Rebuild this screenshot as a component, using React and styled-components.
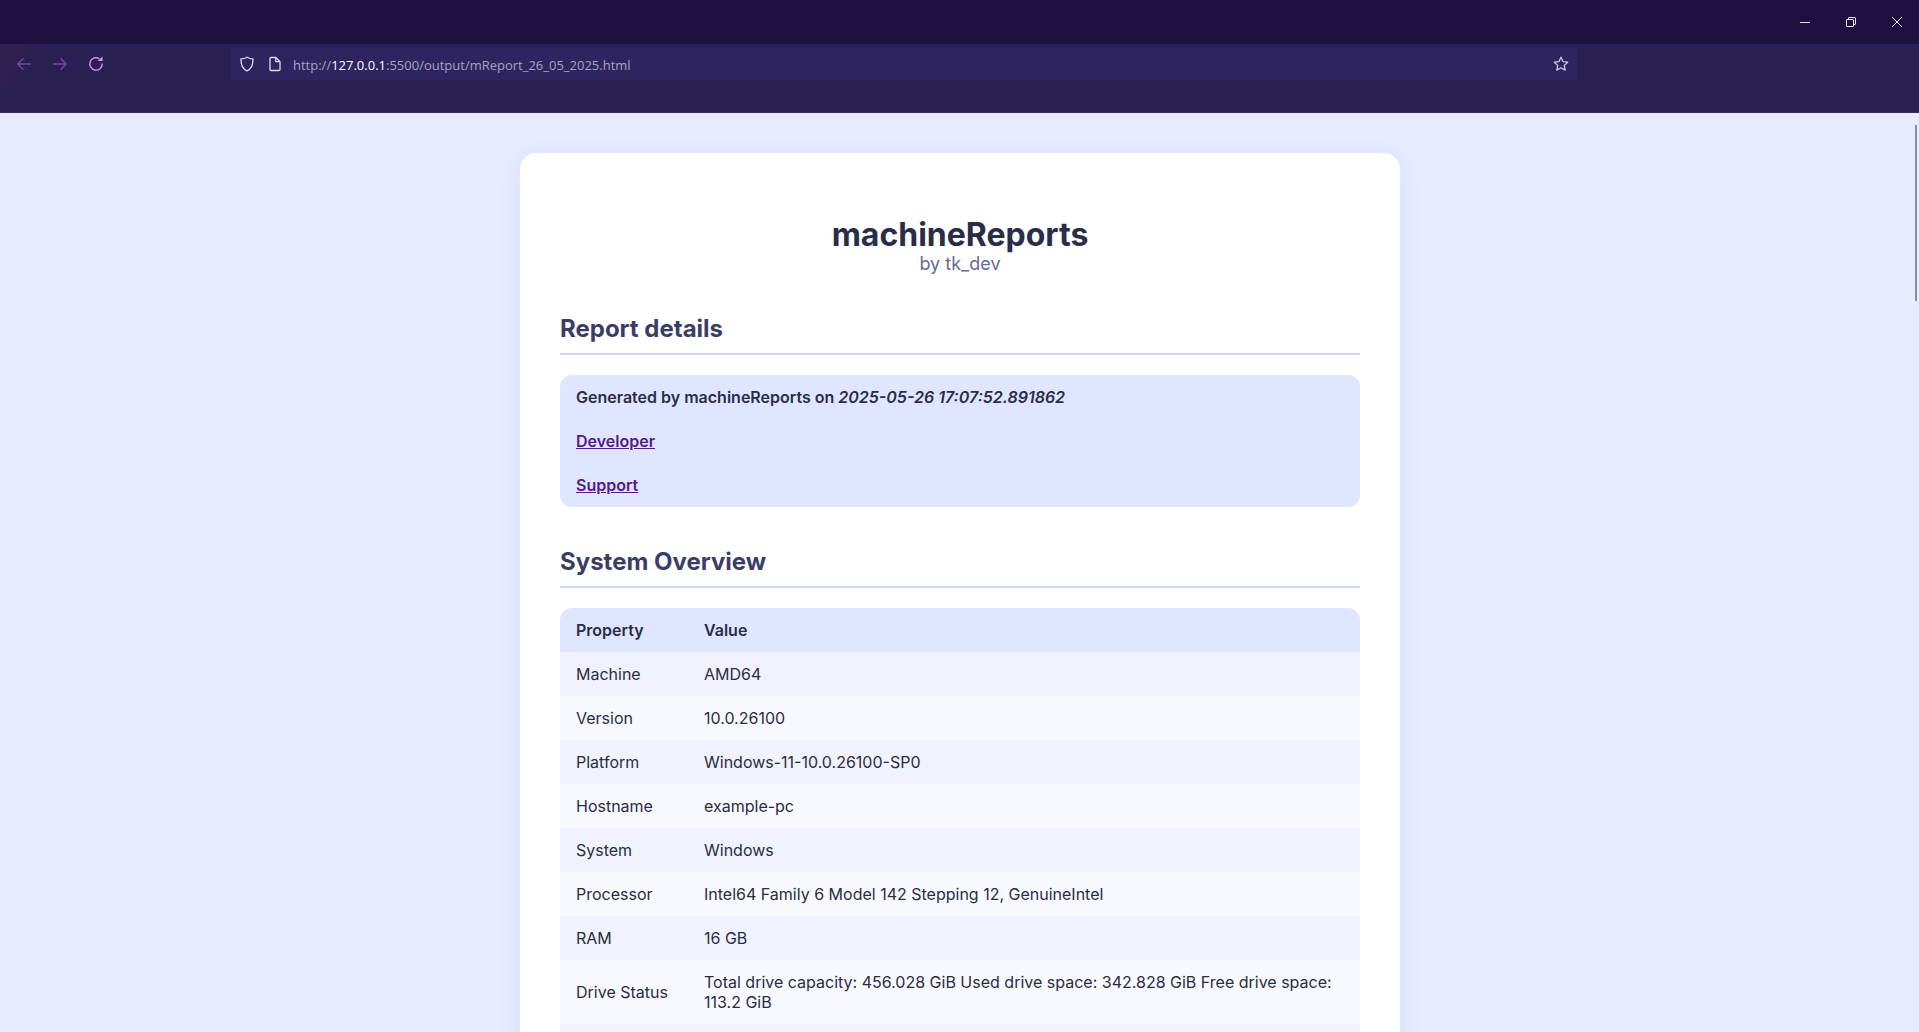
import React from "react";
import styled, { createGlobalStyle } from "styled-components";

const rows = [
    ["Machine", "AMD64"],
    ["Version", "10.0.26100"],
    ["Platform", "Windows-11-10.0.26100-SP0"],
    ["Hostname", "example-pc"],
    ["System", "Windows"],
    ["Processor", "Intel64 Family 6 Model 142 Stepping 12, GenuineIntel"],
    ["RAM", "16 GB"],
    [
        "Drive Status",
        "Total drive capacity: 456.028 GiB Used drive space: 342.828 GiB Free drive space: 113.2 GiB",
    ],
    ["\u00a0", "\u00a0"],
];

function App() {
    return (
        <Window>
            <GlobalStyle />
            <TitleBar>
                <WindowButton>
                    <svg width="12" height="12" viewBox="0 0 12 12">
                        <path d="M1 6.5h10" stroke="#e9e2fa" strokeWidth="1" fill="none" />
                    </svg>
                </WindowButton>
                <WindowButton>
                    <svg width="12" height="12" viewBox="0 0 12 12" fill="none" stroke="#e9e2fa">
                        <rect x="1.5" y="3.5" width="7" height="7" rx="0.5" />
                        <path d="M3.5 3.5V2a.5.5 0 0 1 .5-.5h6a.5.5 0 0 1 .5.5v6a.5.5 0 0 1-.5.5H8.5" />
                    </svg>
                </WindowButton>
                <WindowButton>
                    <svg width="12" height="12" viewBox="0 0 12 12" fill="none" stroke="#e9e2fa">
                        <path d="M1 1l10 10M11 1L1 11" />
                    </svg>
                </WindowButton>
            </TitleBar>
            <Toolbar>
                <NavGroup>
                    <NavIcon>
                        <svg width="16" height="16" viewBox="0 0 16 16" fill="none" stroke="#6f4d9f" strokeWidth="1.4" strokeLinecap="round" strokeLinejoin="round">
                            <path d="M14.5 8H1.8M7 2.8L1.8 8 7 13.2" />
                        </svg>
                    </NavIcon>
                    <NavIcon>
                        <svg width="16" height="16" viewBox="0 0 16 16" fill="none" stroke="#6f4d9f" strokeWidth="1.4" strokeLinecap="round" strokeLinejoin="round">
                            <path d="M1.5 8h12.7M9 2.8L14.2 8 9 13.2" />
                        </svg>
                    </NavIcon>
                    <NavIcon>
                        <svg width="16" height="16" viewBox="0 0 16 16" fill="none">
                            <path d="M10.8 2.4A6.2 6.2 0 1 0 14.2 8" stroke="#c79cf2" strokeWidth="1.4" strokeLinecap="round" />
                            <path d="M9.6 4.9h4.9V0.4z" fill="#c79cf2" />
                        </svg>
                    </NavIcon>
                </NavGroup>
                <UrlBar>
                    <UrlIcon>
                        <svg width="16" height="16" viewBox="0 0 16 16" fill="none" stroke="#ddd8ef" strokeWidth="1.3" strokeLinejoin="round">
                            <path d="M8 1.2c1.8 1.1 3.7 1.6 6 1.7.2 5.8-1.6 9.8-6 11.9C3.600 12.700 1.800 8.700 2 2.900c2.300-.1 4.200-.6 6-1.700z" />
                        </svg>
                    </UrlIcon>
                    <UrlIcon>
                        <svg width="16" height="16" viewBox="0 0 16 16" fill="none" stroke="#ddd8ef" strokeWidth="1.3" strokeLinejoin="round">
                            <path d="M3 2.500A1 1 0 0 1 4 1.500h4.800L13 5.700V13.500a1 1 0 0 1-1 1H4a1 1 0 0 1-1-1z" />
                            <path d="M8.800 1.500v4.200H13" />
                        </svg>
                    </UrlIcon>
                    <UrlText>
                        http://<strong>127.0.0.1</strong>:5500/output/mReport_26_05_2025.html
                    </UrlText>
                    <StarIcon>
                        <svg width="16" height="16" viewBox="0 0 16 16" fill="none" stroke="#cfc8ea" strokeWidth="1.3" strokeLinejoin="round">
                            <path d="M8 1.300l2 4.300 4.700.6-3.400 3.200.9 4.700L8 11.800l-4.200 2.300.9-4.700L1.300 6.200 6 5.600z" />
                        </svg>
                    </StarIcon>
                </UrlBar>
            </Toolbar>
            <Page>
                <Card>
                    <Header>
                        <Title>machineReports</Title>
                        <Byline>by tk_dev</Byline>
                    </Header>
                    <SectionTitle>Report details</SectionTitle>
                    <DetailsBox>
                        <DetailLine>
                            Generated by machineReports on <em>2025-05-26 17:07:52.891862</em>
                        </DetailLine>
                        <DetailLine>
                            <DetailLink href="#developer">Developer</DetailLink>
                        </DetailLine>
                        <DetailLine>
                            <DetailLink href="#support">Support</DetailLink>
                        </DetailLine>
                    </DetailsBox>
                    <SectionTitle>System Overview</SectionTitle>
                    <Table>
                        <thead>
                            <tr>
                                <HeadCell $first>Property</HeadCell>
                                <HeadCell>Value</HeadCell>
                            </tr>
                        </thead>
                        <tbody>
                            {rows.map((row, index) => {
                                return (
                                    <Row key={index}>
                                        <Cell>{row[0]}</Cell>
                                        <Cell>{row[1]}</Cell>
                                    </Row>
                                );
                            })}
                        </tbody>
                    </Table>
                </Card>
                <Scrollbar />
            </Page>
        </Window>
    );
}

const GlobalStyle = createGlobalStyle`
    html, body {
        margin: 0;
        height: 100%;
        overflow: hidden;
    }
    body {
        font-family: Inter, "Liberation Sans", sans-serif;
    }
`;

const Window = styled.div`
    display: flex;
    flex-direction: column;
    height: 100vh;
    overflow: hidden;
`;

const TitleBar = styled.div`
    display: flex;
    justify-content: flex-end;
    height: 44px;
    margin-right: -1px;
    background-color: #1d0f3f;
`;

const WindowButton = styled.div`
    display: flex;
    align-items: center;
    justify-content: center;
    width: 46px;
    height: 44px;
`;

const Toolbar = styled.div`
    display: flex;
    align-items: flex-start;
    height: 64px;
    padding-top: 4px;
    background: linear-gradient(118deg, #30204f 0, #30204f 14px, transparent 34px), #2a1f52;
    border-bottom: 1px solid #3a2c70;
`;

const NavGroup = styled.div`
    display: flex;
    align-items: center;
    width: 231px;
    height: 32px;
    padding-left: 6px;
    box-sizing: border-box;
`;

const NavIcon = styled.div`
    display: flex;
    align-items: center;
    justify-content: center;
    width: 36px;
    height: 32px;
`;

const UrlBar = styled.div`
    display: flex;
    align-items: center;
    width: 1346px;
    height: 32px;
    padding: 0 5px 0 8px;
    box-sizing: border-box;
    border-radius: 4px;
    background-color: #2e2560;
`;

const UrlIcon = styled.div`
    display: flex;
    align-items: center;
    justify-content: center;
    width: 16px;
    height: 16px;
    margin-right: 12px;
`;

const StarIcon = styled.div`
    display: flex;
    align-items: center;
    justify-content: center;
    width: 16px;
    height: 16px;
    margin-left: auto;
    margin-right: 3px;
`;

const UrlText = styled.div`
    margin-left: -2px;
    padding-top: 2px;
    color: #a8a2c4;
    font-family: "Open Sans", sans-serif;
    font-size: 13px;
    strong {
        color: #fff;
        font-weight: 400;
    }
`;

const Page = styled.div`
    position: relative;
    flex: 1;
    display: flex;
    justify-content: center;
    padding: 40px 0 0 1px;
    overflow: hidden;
    background-color: #e6ebff;
`;

const Scrollbar = styled.div`
    position: absolute;
    top: 12px;
    right: 2px;
    width: 2px;
    height: 176px;
    background-color: #8b8d98;
`;

const Card = styled.div`
    align-self: flex-start;
    width: 880px;
    padding: 40px;
    box-sizing: border-box;
    border-radius: 16px;
    background-color: #fff;
    box-shadow: 0 4px 24px rgba(79, 70, 229, 0.08);
`;

const Header = styled.div`
    text-align: center;
    margin-top: 23px;
    margin-bottom: 40px;
`;

const Title = styled.h1`
    margin: 0;
    color: #2a2d4a;
    font-size: 32px;
    line-height: 38px;
    font-weight: 700;
`;

const Byline = styled.div`
    color: #646b94;
    font-size: 18px;
    line-height: 20px;
`;

const SectionTitle = styled.h2`
    margin: 0 0 20px;
    padding-bottom: 10px;
    color: #3a3e66;
    font-size: 24px;
    line-height: 29px;
    font-weight: 700;
    border-bottom: 2px solid #cfd6fb;
`;

const DetailsBox = styled.div`
    display: flex;
    flex-direction: column;
    gap: 24px;
    margin-bottom: 40px;
    padding: 12px 16px;
    border-radius: 12px;
    background-color: #e0e6ff;
`;

const DetailLine = styled.div`
    color: #2a2d4a;
    font-size: 16px;
    line-height: 20px;
    font-weight: 600;
    em {
        font-weight: 600;
    }
`;

const DetailLink = styled.a`
    color: #551a8b;
    text-decoration: underline;
`;

const Table = styled.table`
    width: 100%;
    border-collapse: separate;
    border-spacing: 0;
    border-radius: 12px;
    overflow: hidden;
    font-size: 16px;
    line-height: 20px;
`;

const HeadCell = styled.th`
    width: ${(props) => (props.$first ? "96px" : "auto")};
    padding: 12px 16px;
    text-align: left;
    color: #2a2d4a;
    font-weight: 600;
    background-color: #e0e6ff;
`;

const Row = styled.tr`
    background-color: #f8f9ff;
    &:nth-child(odd) {
        background-color: #f0f2fe;
    }
`;

const Cell = styled.td`
    padding: 12px 16px;
    color: #2a2d3f;
    font-weight: 400;
`;

export default App;
